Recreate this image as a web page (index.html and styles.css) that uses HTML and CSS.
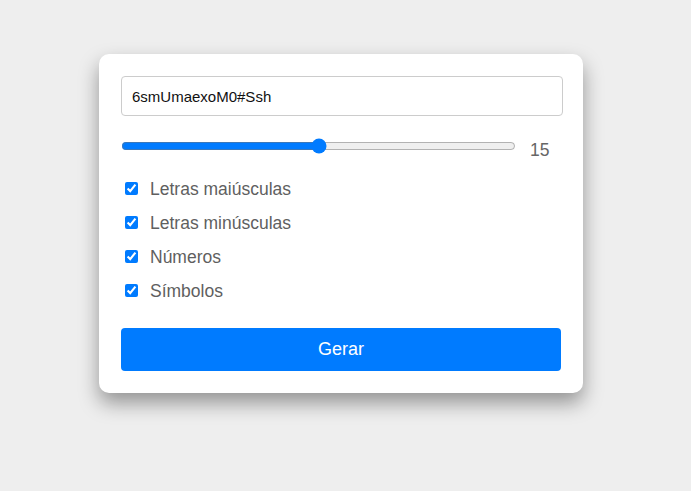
FILE: index.html
```html
<!DOCTYPE html>
<html lang="pt">
<head>
<meta charset="utf-8">
<title>Gerador de senhas</title>
<link rel="stylesheet" href="styles.css">
</head>
<body>
<div class="card">
  <input class="output" type="text" value="6smUmaexoM0#Ssh" readonly>
  <div class="length-row">
    <input class="range" type="range" min="5" max="25" value="15">
    <span class="length-value">15</span>
  </div>
  <label class="option"><input type="checkbox" checked><span class="option-text">Letras maiúsculas</span></label>
  <label class="option"><input type="checkbox" checked><span class="option-text">Letras minúsculas</span></label>
  <label class="option"><input type="checkbox" checked><span class="option-text">Números</span></label>
  <label class="option"><input type="checkbox" checked><span class="option-text">Símbolos</span></label>
  <button class="generate" type="button">Gerar</button>
</div>
</body>
</html>
```

FILE: styles.css
```css
html, body {
  margin: 0;
  padding: 0;
}
body {
  background: #eeeeee;
  font-family: "Liberation Sans", Arial, sans-serif;
  height: 491px;
}
.card {
  box-sizing: border-box;
  width: 484px;
  margin: 54px 0 0 99px;
  padding: 22px;
  background: #ffffff;
  border-radius: 10px;
  box-shadow: 0 10px 20px rgba(0, 0, 0, 0.38);
  display: flex;
  flex-direction: column;
}
.output {
  box-sizing: border-box;
  width: 442px;
  height: 40px;
  margin: 0;
  padding: 0 10px;
  border: 1px solid #cccccc;
  border-radius: 4px;
  font-family: "Liberation Sans", Arial, sans-serif;
  font-size: 15px;
  color: #111111;
  outline: none;
}
.length-row {
  display: flex;
  align-items: center;
  height: 20px;
  margin-top: 20px;
  margin-bottom: 15px;
}
.range {
  flex: 1;
  margin: 2px 1px 2px 0;
  accent-color: #007bff;
}
.length-value {
  width: 31px;
  margin-left: 13px;
  margin-top: 9px;
  font-size: 17.5px;
  color: #666666;
}
.option {
  display: flex;
  align-items: center;
  height: 34px;
  font-size: 17.5px;
  color: #5f5f5f;
}
.option input {
  margin: 1px 3px 0 4px;
  width: 13px;
  height: 13px;
  accent-color: #007bff;
}
.option-text {
  margin-left: 9px;
  margin-top: 2px;
}
.generate {
  margin-top: 21px;
  height: 43px;
  width: 440px;
  border: none;
  border-radius: 4px;
  background: #007bff;
  color: #ffffff;
  font-family: "Liberation Sans", Arial, sans-serif;
  font-size: 18px;
  cursor: pointer;
}
```
